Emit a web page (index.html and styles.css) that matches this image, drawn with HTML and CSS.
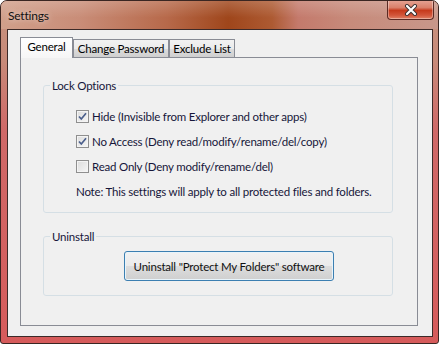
FILE: index.html
```html
<!DOCTYPE html>
<html lang="en">
<head>
  <meta charset="UTF-8" />
  <title>Settings</title>
  <link rel="stylesheet" href="styles.css">
</head>
<body>
  <div class="window">
    <div class="titlebar">
      <div class="title">Settings</div>
      <div class="close-btn">
        <svg width="14" height="12" viewBox="0 0 14 12">
          <path d="M3 2 L11 10 M11 2 L3 10" stroke="#3a3030" stroke-width="4" stroke-linecap="round" fill="none"/>
          <path d="M3 2 L11 10 M11 2 L3 10" stroke="#fff" stroke-width="2.2" stroke-linecap="round" fill="none"/>
        </svg>
      </div>
    </div>

    <div class="client">
      <div class="tabs">
        <div class="tab active tab-general">General</div>
        <div class="tab tab-password">Change Password</div>
        <div class="tab tab-exclude">Exclude List</div>
      </div>

      <div class="tab-panel">
        <fieldset class="group">
          <legend>Lock Options</legend>
          <div class="group-body lock-body">
            <label class="check-row">
              <span class="cb">
                <svg width="13" height="13" viewBox="0 0 13 13"><path d="M3 6.5 L5.3 9 L10 3.3" stroke="#4b5f8c" stroke-width="1.7" fill="none"/></svg>
              </span>
              Hide (Invisible from Explorer and other apps)
            </label>
            <label class="check-row">
              <span class="cb">
                <svg width="13" height="13" viewBox="0 0 13 13"><path d="M3 6.5 L5.3 9 L10 3.3" stroke="#4b5f8c" stroke-width="1.7" fill="none"/></svg>
              </span>
              No Access (Deny read/modify/rename/del/copy)
            </label>
            <label class="check-row">
              <span class="cb"></span>
              Read Only (Deny modify/rename/del)
            </label>
            <div class="note">Note: This settings will apply to all protected files and folders.</div>
          </div>
        </fieldset>

        <fieldset class="group uninstall">
          <legend>Uninstall</legend>
          <div class="group-body">
            <button class="btn">Uninstall "Protect My Folders" software</button>
          </div>
        </fieldset>
      </div>
    </div>
  </div>
</body>
</html>
```

FILE: styles.css
```css
* { box-sizing: border-box; }
body {
  margin: 0;
  padding: 0;
  background: #fff;
  font-family: 'Lato', sans-serif;
  font-size: 11.5px;
  letter-spacing: -0.2px;
  color: #16163a;
}
.window {
  width: 439px;
  height: 344px;
  border: 1px solid #3a2622;
  border-radius: 7px 7px 3px 3px;
  background: linear-gradient(180deg, #c8937f 0, #c88a79 60px, #cf6968 130px, #d65b5b 100%);
  display: flex;
  flex-direction: column;
  overflow: hidden;
}
.titlebar {
  height: 28px;
  display: flex;
  justify-content: space-between;
  align-items: flex-start;
  padding-left: 7px;
  padding-right: 4px;
  background:
    linear-gradient(180deg, rgba(255,255,255,0.18) 0, rgba(255,255,255,0) 60%),
    linear-gradient(90deg, #d1a08b 0%, #c98d78 18%, #b7694a 38%, #9f461b 52%, #ad5a32 62%, #c47a6c 68%, #c78b7b 80%, #c8978a 100%);
}
.title {
  margin-top: 7px;
  font-size: 12px;
  color: #111;
  text-shadow: 0 0 6px rgba(255,255,255,0.7);
}
.close-btn {
  width: 47px;
  height: 20px;
  margin-top: -1px;
  border: 1px solid #5a2a24;
  border-top: none;
  border-radius: 0 0 4px 4px;
  background: linear-gradient(180deg, #e6a596 0%, #d9806a 40%, #c63a1c 55%, #d2553a 80%, #e08266 100%);
  box-shadow: inset 0 0 0 1px rgba(255,255,255,0.35);
  display: flex;
  align-items: center;
  justify-content: center;
}
.client {
  flex: 1;
  margin: 0 5px 6px 6px;
  border: 1px solid #3c2a28;
  background: #f0f0f0;
  padding: 7px 14px 10px 12px;
  display: flex;
  flex-direction: column;
}
.tabs {
  display: flex;
  align-items: flex-end;
  height: 20px;
}
.tab {
  height: 18px;
  border: 1px solid #898c95;
  border-bottom: none;
  background: linear-gradient(180deg, #f2f2f2 0, #ebebeb 50%, #dddddd 51%, #cfcfcf 100%);
  line-height: 17px;
  text-align: center;
  color: #000;
  white-space: nowrap;
}
.tab-general { width: 53px; }
.tab-password { width: 96px; }
.tab-exclude { width: 66px; }
.tab.active {
  height: 21px;
  margin-bottom: -1px;
  background: linear-gradient(180deg, #ffffff 0, #f6f6f6 100%);
  position: relative;
  z-index: 1;
  line-height: 18px;
}
.tab-panel {
  flex: 1;
  border: 1px solid #898c95;
  background: #f0f0f0;
  padding: 20px 24px 0 22px;
}
.group {
  margin: 0;
  padding: 0;
  border: 1px solid #d5dfe5;
  border-radius: 3px;
}
.group legend {
  margin-left: 6px;
  padding: 0 2px;
  line-height: 15px;
}
.group-body {
  padding: 15px 0 12px 32px;
}
.lock-body {
  display: flex;
  flex-direction: column;
  gap: 9px;
}
.check-row {
  display: flex;
  align-items: center;
  gap: 3px;
  height: 16px;
  white-space: nowrap;
}
.cb {
  width: 13px;
  height: 13px;
  border: 1px solid #8f8f8f;
  background: linear-gradient(135deg, #dcdcdc 0, #f6f6f6 100%);
  box-shadow: inset 0 0 0 1px #f4f4f4;
  position: relative;
  flex: none;
}
.cb svg { position: absolute; left: -1px; top: -1px; }
.note {
  margin-top: 1px;
  height: 16px;
  line-height: 16px;
  white-space: nowrap;
}
.uninstall { margin-top: 16px; }
.uninstall .group-body { padding: 7px 0 14px 80px; }
.btn {
  width: 210px;
  height: 30px;
  border: 1px solid #3c7fb1;
  border-radius: 3px;
  background: linear-gradient(180deg, #f2f2f2 0, #ebebeb 50%, #dddddd 51%, #cfcfcf 100%);
  box-shadow: inset 0 0 0 1px #e8f4fb;
  font-family: 'Lato', sans-serif;
  font-size: 11.5px;
  letter-spacing: -0.2px;
  color: #111;
  padding: 0;
  white-space: nowrap;
}
```
